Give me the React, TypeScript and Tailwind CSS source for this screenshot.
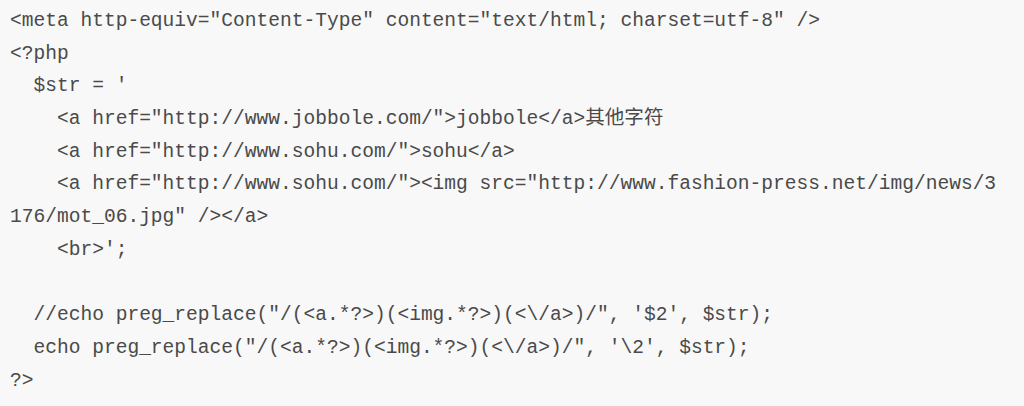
import React from "react";

const lines: string[] = [
  `<meta http-equiv="Content-Type" content="text/html; charset=utf-8" />`,
  `<?php`,
  `  $str = '`,
  `    <a href="http://www.jobbole.com/">jobbole</a>其他字符`,
  `    <a href="http://www.sohu.com/">sohu</a>`,
  `    <a href="http://www.sohu.com/"><img src="http://www.fashion-press.net/img/news/3`,
  `176/mot_06.jpg" /></a>`,
  `    <br>';`,
  ``,
  `  //echo preg_replace("/(<a.*?>)(<img.*?>)(<\\/a>)/", '$2', $str);`,
  `  echo preg_replace("/(<a.*?>)(<img.*?>)(<\\/a>)/", '\\2', $str);`,
  `?>`,
];

export default function App() {
  return (
    <div className="w-[1024px] h-[406px] bg-[#f8f8f8] overflow-hidden">
      <pre
        className="m-0 pl-[10px] pt-[5px] text-[19.57px] leading-[32.7px] text-[#4a4a4a] whitespace-pre"
        style={{ fontFamily: '"Liberation Mono", "Noto Sans CJK SC", monospace' }}
      >
        {lines.map((l, i) => (
          <div key={i} className="h-[32.7px]">
            {l}
          </div>
        ))}
      </pre>
    </div>
  );
}
